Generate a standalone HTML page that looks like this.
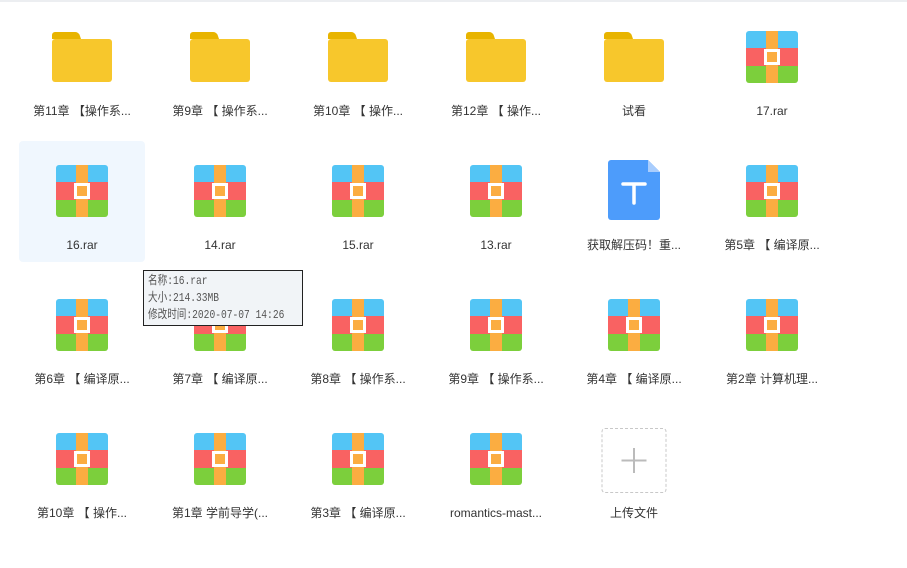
<!DOCTYPE html><html><head><meta charset="utf-8"><style>
body{margin:0;width:907px;height:568px;background:#fff;position:relative;overflow:hidden;font-family:"Liberation Sans","Noto Sans CJK SC",sans-serif;}
.top{position:absolute;left:0;top:0;width:907px;height:2px;background:#eceef1}
.c{position:absolute;width:126px;height:121px;border-radius:4px}
.c.h{background:#f0f7fe}
.ic{position:absolute;left:50%;transform:translateX(-50%)}
.l{position:absolute;left:0;width:126px;top:96px;text-align:center;font-size:12px;color:#333;white-space:nowrap;line-height:16px}
.tip{position:absolute;left:143px;top:270px;width:160px;height:56px;border:1px solid #222;background:#f1f4f7;box-sizing:border-box;overflow:hidden}
.tip div{position:absolute;left:4px;top:2px;font-family:"Liberation Mono","Noto Sans CJK SC",monospace;font-size:12px;color:#555;line-height:17px;white-space:nowrap;transform:scaleX(0.8);transform-origin:0 0}
</style></head><body>
<div class="top"></div>
<svg width="0" height="0" style="position:absolute"><defs>
<g id="rar"><clipPath id="cp"><rect width="52" height="52" rx="3"/></clipPath><g clip-path="url(#cp)"><rect width="52" height="17" fill="#53c5f5"/><rect y="17" width="52" height="18" fill="#f96262"/><rect y="35" width="52" height="17" fill="#7ccf3c"/><rect x="20" width="12" height="52" fill="#fbad41"/><rect x="18" y="18" width="16" height="16" fill="#fff"/><rect x="21" y="21" width="10" height="10" fill="#fbad41"/></g></g>
<g id="fd"><path d="M0 3a3 3 0 0 1 3-3h20a5 5 0 0 1 5 4l1 3H0z" fill="#e8b400"/><rect y="7" width="60" height="43" rx="3" fill="#f7c72c"/></g>
</defs></svg>

<div class="c" style="left:19px;top:7px"><svg class="ic" style="top:25px" width="60" height="50"><use href="#fd"/></svg><div class="l">第11章 【操作系...</div></div>
<div class="c" style="left:157px;top:7px"><svg class="ic" style="top:25px" width="60" height="50"><use href="#fd"/></svg><div class="l">第9章 【 操作系...</div></div>
<div class="c" style="left:295px;top:7px"><svg class="ic" style="top:25px" width="60" height="50"><use href="#fd"/></svg><div class="l">第10章 【 操作...</div></div>
<div class="c" style="left:433px;top:7px"><svg class="ic" style="top:25px" width="60" height="50"><use href="#fd"/></svg><div class="l">第12章 【 操作...</div></div>
<div class="c" style="left:571px;top:7px"><svg class="ic" style="top:25px" width="60" height="50"><use href="#fd"/></svg><div class="l">试看</div></div>
<div class="c" style="left:709px;top:7px"><svg class="ic" style="top:24px" width="52" height="52"><use href="#rar"/></svg><div class="l">17.rar</div></div>

<div class="c h" style="left:19px;top:141px"><svg class="ic" style="top:24px" width="52" height="52"><use href="#rar"/></svg><div class="l">16.rar</div></div>
<div class="c" style="left:157px;top:141px"><svg class="ic" style="top:24px" width="52" height="52"><use href="#rar"/></svg><div class="l">14.rar</div></div>
<div class="c" style="left:295px;top:141px"><svg class="ic" style="top:24px" width="52" height="52"><use href="#rar"/></svg><div class="l">15.rar</div></div>
<div class="c" style="left:433px;top:141px"><svg class="ic" style="top:24px" width="52" height="52"><use href="#rar"/></svg><div class="l">13.rar</div></div>
<div class="c" style="left:571px;top:141px"><svg class="ic" style="top:19px" width="52" height="60"><path d="M3 0h37l12 12v45a3 3 0 0 1-3 3H3a3 3 0 0 1-3-3V3a3 3 0 0 1 3-3z" fill="#4d9cfb"/><path d="M40 0l12 12H40z" fill="#a9cdfd"/><path d="M15 24h22M26 24v19" stroke="#fff" stroke-width="3.5" stroke-linecap="round"/></svg><div class="l">获取解压码！重...</div></div>
<div class="c" style="left:709px;top:141px"><svg class="ic" style="top:24px" width="52" height="52"><use href="#rar"/></svg><div class="l">第5章 【 编译原...</div></div>

<div class="c" style="left:19px;top:275px"><svg class="ic" style="top:24px" width="52" height="52"><use href="#rar"/></svg><div class="l">第6章 【 编译原...</div></div>
<div class="c" style="left:157px;top:275px"><svg class="ic" style="top:24px" width="52" height="52"><use href="#rar"/></svg><div class="l">第7章 【 编译原...</div></div>
<div class="c" style="left:295px;top:275px"><svg class="ic" style="top:24px" width="52" height="52"><use href="#rar"/></svg><div class="l">第8章 【 操作系...</div></div>
<div class="c" style="left:433px;top:275px"><svg class="ic" style="top:24px" width="52" height="52"><use href="#rar"/></svg><div class="l">第9章 【 操作系...</div></div>
<div class="c" style="left:571px;top:275px"><svg class="ic" style="top:24px" width="52" height="52"><use href="#rar"/></svg><div class="l">第4章 【 编译原...</div></div>
<div class="c" style="left:709px;top:275px"><svg class="ic" style="top:24px" width="52" height="52"><use href="#rar"/></svg><div class="l">第2章 计算机理...</div></div>

<div class="c" style="left:19px;top:409px"><svg class="ic" style="top:24px" width="52" height="52"><use href="#rar"/></svg><div class="l">第10章 【 操作...</div></div>
<div class="c" style="left:157px;top:409px"><svg class="ic" style="top:24px" width="52" height="52"><use href="#rar"/></svg><div class="l">第1章 学前导学(...</div></div>
<div class="c" style="left:295px;top:409px"><svg class="ic" style="top:24px" width="52" height="52"><use href="#rar"/></svg><div class="l">第3章 【 编译原...</div></div>
<div class="c" style="left:433px;top:409px"><svg class="ic" style="top:24px" width="52" height="52"><use href="#rar"/></svg><div class="l">romantics-mast...</div></div>
<div class="c" style="left:571px;top:409px"><svg class="ic" style="top:19px" width="65" height="65"><rect x="0.5" y="0.5" width="64" height="64" rx="3" fill="none" stroke="#c8c8c8" stroke-dasharray="3 2"/><path d="M20 32.5h25M32.5 20v25" stroke="#bbb" stroke-width="2"/></svg><div class="l">上传文件</div></div>

<div class="tip"><div>名称:16.rar<br>大小:214.33MB<br>修改时间:2020-07-07 14:26</div></div>
</body></html>
